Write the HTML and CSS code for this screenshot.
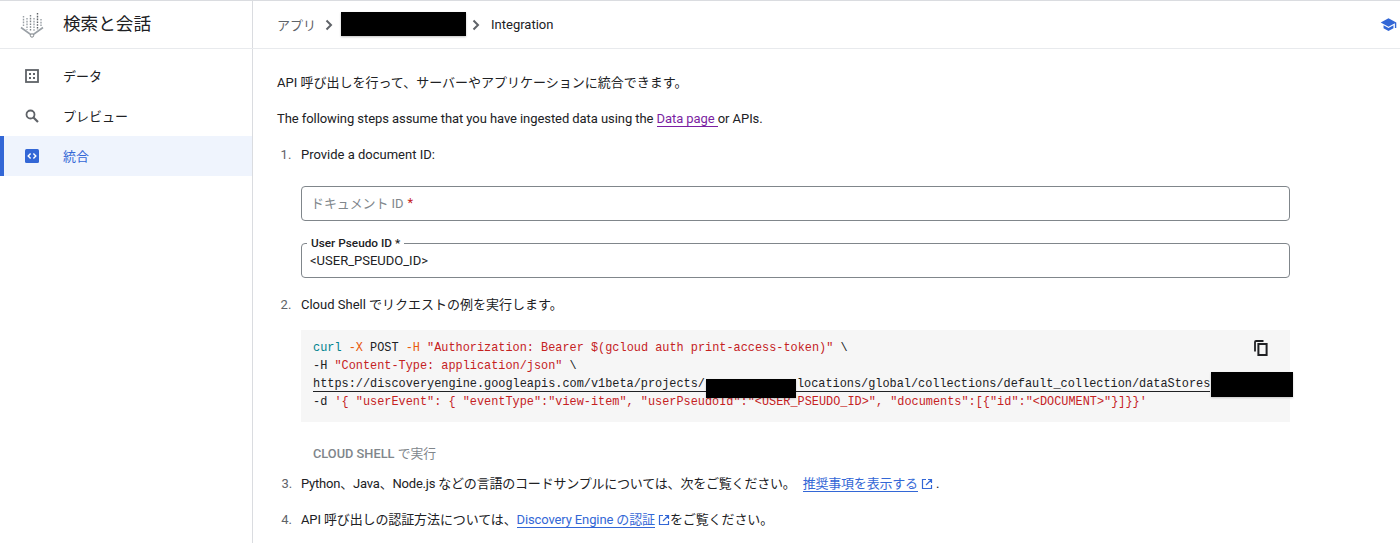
FILE: index.html
```html
<!DOCTYPE html>
<html lang="ja">
<head>
<meta charset="utf-8">
<title>統合</title>
<link rel="stylesheet" href="styles.css">
</head>
<body>
<header class="topbar">
  <div class="brand">
    <svg class="logo" viewBox="0 0 24 26" width="24" height="26" fill="none">
      <g stroke="#9aa0a6" stroke-width="1.4" stroke-dasharray="1.6 1.2">
        <path d="M3.5 4v10"/><path d="M7 6v12"/><path d="M10.5 3v16" stroke="#80868b"/><path d="M14 6v13"/><path d="M17.5 1v17" stroke="#5f6368"/><path d="M21 7v7"/>
      </g>
      <path d="M1 15.5l11 8 11-8" stroke="#9aa0a6" stroke-width="1.6"/>
      <circle cx="12" cy="23.5" r="1.7" fill="#fff" stroke="#80868b" stroke-width="1"/>
    </svg>
    <span class="brand-name">検索と会話</span>
  </div>
  <nav class="crumbs">
    <span class="crumb-muted">アプリ</span>
    <svg class="chev" viewBox="0 0 8 12" width="8" height="12"><path d="M1.5 1.5L6 6l-4.5 4.5" fill="none" stroke="#5f6368" stroke-width="2"/></svg>
    <span class="redact-inline"></span>
    <svg class="chev" viewBox="0 0 8 12" width="8" height="12"><path d="M1.5 1.5L6 6l-4.5 4.5" fill="none" stroke="#5f6368" stroke-width="2"/></svg>
    <span class="crumb-current">Integration</span>
  </nav>
  <svg class="learn" viewBox="0 0 24 24" width="17" height="17"><path fill="#3367d6" d="M5 13.18v4L12 21l7-3.82v-4L12 17l-7-3.82zM12 3L1 9l11 6 9-4.91V17h2V9L12 3z"/></svg>
</header>
<div class="shell">
  <aside class="sidebar">
    <a class="nav-item">
      <svg viewBox="0 0 14 14" width="14" height="14" fill="none"><rect x="1" y="1" width="12" height="12" stroke="#5f6368" stroke-width="1.8"/><g fill="#5f6368"><rect x="4" y="4" width="2" height="2"/><rect x="8" y="4" width="2" height="2"/><rect x="4" y="8" width="2" height="2"/><rect x="8" y="8" width="2" height="2"/></g></svg>
      <span>データ</span>
    </a>
    <a class="nav-item">
      <svg viewBox="0 0 14 14" width="14" height="14" fill="none"><circle cx="5.5" cy="5.5" r="4" stroke="#5f6368" stroke-width="1.8"/><path d="M8.5 8.5L13 13" stroke="#5f6368" stroke-width="2.2"/></svg>
      <span>プレビュー</span>
    </a>
    <a class="nav-item active">
      <svg viewBox="0 0 14 14" width="14" height="14"><rect width="14" height="14" rx="1.5" fill="#3367d6"/><path d="M5.6 4.6L3.2 7l2.4 2.4M8.4 4.6L10.8 7 8.4 9.4" fill="none" stroke="#fff" stroke-width="1.4"/></svg>
      <span>統合</span>
    </a>
  </aside>
  <main class="content">
    <p class="lead">API 呼び出しを行って、サーバーやアプリケーションに統合できます。</p>
    <p class="lead second">The following steps assume that you have ingested data using the <a class="visited">Data page </a> or APIs.</p>
    <ol class="steps">
      <li class="step-one">
        <p>Provide a document ID:</p>
        <div class="field field-empty"><span>ドキュメント ID</span> <b class="req">*</b></div>
        <div class="field field-filled">
          <span class="float-label">User Pseudo ID *</span>
          <span>&lt;USER_PSEUDO_ID&gt;</span>
        </div>
      </li>
      <li class="step-two">
        <p>Cloud Shell でリクエストの例を実行します。</p>
        <div class="code-wrap">
          <pre class="code"><span class="teal">curl</span> <span class="orange">-X</span> POST <span class="orange">-H</span> <span class="red">"Authorization: Bearer $(gcloud auth print-access-token)"</span> \
-H <span class="red">"Content-Type: application/json"</span> \
<span class="url">https://discoveryengine.googleapis.com/v1beta/projects/<span class="gap"></span>locations/global/collections/default_collection/dataStores</span>
-d <span class="red">'{ "userEvent": { "eventType":"view-item", "userPseudoId":"&lt;USER_PSEUDO_ID&gt;", "documents":[{"id":"&lt;DOCUMENT&gt;"}]}}'</span></pre>
          <svg class="copy" viewBox="0 0 14 16" width="14" height="16" fill="none"><path d="M9.5 1H2a1 1 0 0 0-1 1v9.5" stroke="#202124" stroke-width="1.8"/><rect x="4.4" y="4" width="8.2" height="11" stroke="#202124" stroke-width="2"/></svg>
          <span class="redact r-project"></span>
          <span class="redact r-store"></span>
        </div>
        <div class="shell-btn"><b>CLOUD SHELL</b> で実行</div>
      </li>
      <li class="step-three">Python、Java、Node.js などの言語のコードサンプルについては、次をご覧ください。 <a class="ext gap-left">推奨事項を表示する</a><svg class="ext-icon" viewBox="0 0 12 12" width="12" height="12" fill="none"><path d="M5 1.5H1.5v9h9V7M7 1.5h3.5V5M10.5 1.5L5 7" stroke="#3367d6" stroke-width="1.2"/></svg> .</li>
      <li class="step-four">API 呼び出しの認証方法については、<a class="ext">Discovery Engine の認証</a><svg class="ext-icon" viewBox="0 0 12 12" width="12" height="12" fill="none"><path d="M5 1.5H1.5v9h9V7M7 1.5h3.5V5M10.5 1.5L5 7" stroke="#3367d6" stroke-width="1.2"/></svg>をご覧ください。</li>
    </ol>
  </main>
</div>
</body>
</html>
```
FILE: styles.css
```css
* { box-sizing: border-box; }
html, body { margin: 0; height: 543px; overflow: hidden; }
body {
  background: #fff;
  color: #202124;
  font-family: Roboto, "Noto Sans CJK JP", sans-serif;
  font-size: 13px;
  border-top: 1px solid #dadce0;
}
.topbar {
  height: 48px;
  display: flex;
  align-items: center;
  border-bottom: 1px solid #e8eaed;
  overflow: hidden;
}
.brand {
  width: 253px;
  height: 100%;
  flex: none;
  display: flex;
  align-items: center;
  padding-left: 20px;
  gap: 20px;
  border-right: 1px solid #dadce0;
}
.logo { flex: none; }
.brand-name { font-size: 17.6px; padding-bottom: 4px; margin-left: -1px; }
.crumbs {
  display: flex;
  align-items: center;
  padding-left: 24px;
  flex: 1;
}
.crumb-muted { color: #5f6368; margin-right: 9px; }
.chev { flex: none; }
.redact-inline {
  width: 125px;
  height: 24px;
  background: #000;
  margin: -1px 6px 0 8px;
  box-shadow: 0 1px 2px rgba(0, 0, 0, .25);
}
.crumb-current { margin-left: 11px; }
.learn { flex: none; margin-right: 3px; }
.shell { display: flex; height: 494px; }
.sidebar {
  width: 253px;
  flex: none;
  border-right: 1px solid #dadce0;
  padding-top: 7px;
}
.nav-item {
  height: 40px;
  display: flex;
  align-items: center;
  padding-left: 25px;
  gap: 24px;
  font-size: 13px;
  color: #202124;
}
.nav-item span { padding-bottom: 2px; }
.nav-item.active {
  background: #eff4fd;
  color: #3367d6;
  border-left: 4px solid #3367d6;
  padding-left: 21px;
}
.content { flex: 1; padding: 26px 110px 0 24px; min-width: 0; }
.lead { margin: 0; line-height: 16px; }
.lead.second { margin-top: 20px; letter-spacing: -.07px; }
.visited { color: #7b1fa2; border-bottom: 1px solid #7b1fa2; }
.steps { margin: 0; padding: 0 0 0 24px; color: #202124; }
.steps li::marker { color: #5f6368; content: counter(list-item) ".   "; }
.steps p { margin: 0; line-height: 16px; }
.step-one { margin-top: 20px; }
.field {
  width: 989px;
  height: 35px;
  border: 1px solid #80868b;
  border-radius: 4px;
  position: relative;
  display: flex;
  align-items: center;
  gap: 4px;
}
.field-empty { margin-top: 23px; padding: 0 0 2px 9px; color: #80868b; letter-spacing: -.1px; }
.req { color: #c5221f; font-weight: 400; }
.field-filled { margin-top: 22px; padding: 0 0 0 8px; }
.float-label {
  position: absolute;
  left: 5px;
  top: -7px;
  background: #fff;
  padding: 0 4px;
  font-size: 11.8px;
  font-weight: 500;
  line-height: 12px;
}
.step-two { margin-top: 19px; }
.code-wrap {
  position: relative;
  width: 989px;
  height: 92px;
  margin-top: 17px;
  background: #f6f6f6;
}
.code {
  margin: 0;
  padding: 9px 12px;
  font-family: "Liberation Mono", monospace;
  font-size: 11.88px;
  line-height: 18px;
  color: #202124;
  white-space: pre;
}
.teal { color: #00838f; }
.orange { color: #e8590c; }
.red { color: #c5221f; }
.url { border-bottom: 1px solid #202124; }
.gap { display: inline-block; width: 92px; }
.copy { position: absolute; right: 22px; top: 10px; }
.redact { position: absolute; background: #000; box-shadow: 0 1px 2px rgba(0, 0, 0, .2); }
.r-project { left: 405px; top: 49px; width: 90px; height: 19px; }
.r-store { left: 910px; top: 42px; width: 82px; height: 25px; }
.shell-btn { margin: 24px 0 0 12px; line-height: 16px; color: #80868b; font-size: 12.8px; }
.shell-btn b { font-weight: 500; }
.step-three { margin-top: 14px; line-height: 16px; letter-spacing: -.2px; }
.step-four { margin-top: 20px; line-height: 16px; letter-spacing: -.12px; }
.ext { color: #3367d6; border-bottom: 1px solid #3367d6; }
.gap-left { margin-left: 4px; }
.ext-icon { margin-left: 3px; vertical-align: -2px; }
```
